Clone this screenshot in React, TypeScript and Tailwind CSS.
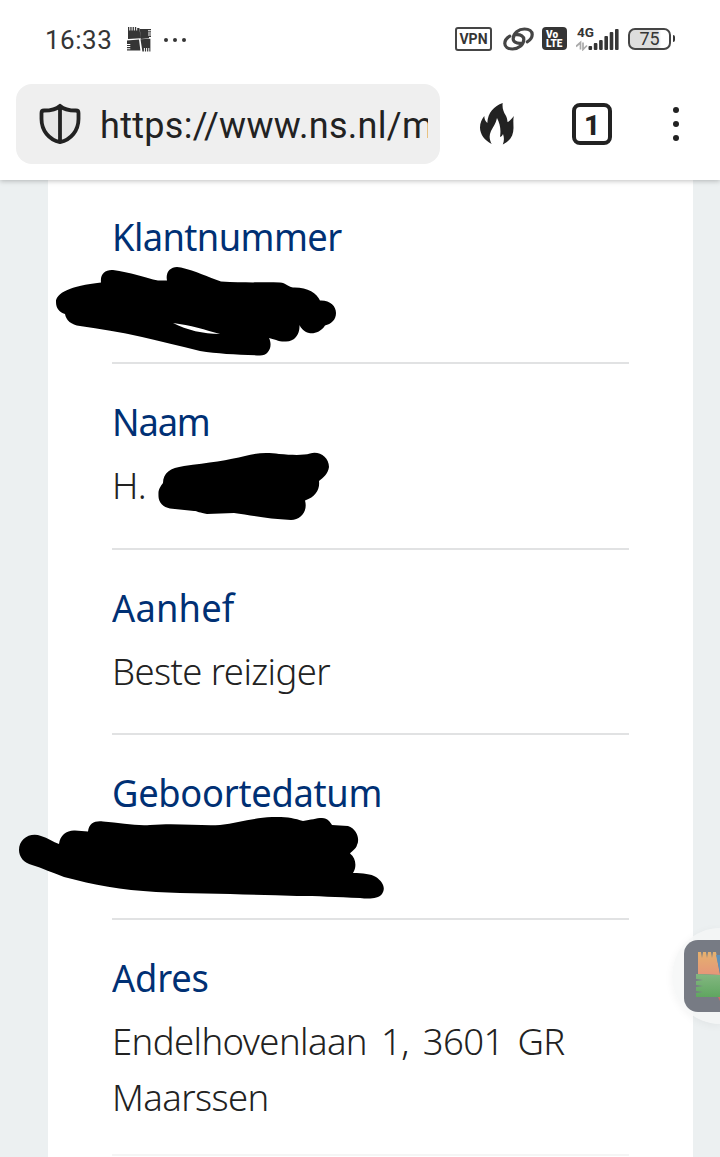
import type { ReactNode } from "react";

type Field = { label: string; value: ReactNode; labelClass: string };

const FIELDS: Field[] = [
  { label: "Klantnummer", value: null, labelClass: "tracking-[-0.6px]" },
  { label: "Naam", value: "H.", labelClass: "tracking-[-1.2px]" },
  { label: "Aanhef", value: "Beste reiziger", labelClass: "tracking-[0.2px]" },
  { label: "Geboortedatum", value: null, labelClass: "tracking-[-0.3px]" },
];

const SIGNAL_BARS = [4, 7, 10, 14, 18, 21];

function AppGlyph() {
  return (
    <svg width="24" height="25" viewBox="0 0 24 25" className="ml-[15px]">
      <path
        fill="#353535"
        d="M1 0h1.3v3.5h1V0h1.3v3.5h1V0h1.3v3.5h1V0h1.3v3.5h1V1h2.2l1.3 10.3L1 12zM12.8 2H24v1.2h-3v1h3v1.2h-3v1h3v1.2h-3v1h3v1.3h-2v1.4l-8.2.8zM0 13.5l12-1 1.4 11H0v-1.2h3.3v-1H0v-1.2h3.3v-1H0v-1.2h3.3v-1H0zM13.5 12.3l9.9-.6v12.9h-1.1V21h-1v3.6h-1.2V21h-1v3.6h-1.2V21h-1v3.6h-1.5z"
      />
    </svg>
  );
}

function StatusBar() {
  return (
    <div className="flex h-[80px] items-start pt-[26px] pl-[45px] text-[#353535]">
      <div className="flex h-[27px] w-[410px] items-center">
        <span className="pt-[2px] text-[26px] leading-[27px] tracking-[0.5px]">16:33</span>
        <AppGlyph />
        <div className="ml-[13px] flex gap-[5px]">
          <i className="size-1 rounded-full bg-[#353535]" />
          <i className="size-1 rounded-full bg-[#353535]" />
          <i className="size-1 rounded-full bg-[#353535]" />
        </div>
      </div>
      <div className="flex h-[25px] items-center">
        <div className="flex h-[24px] w-[37px] items-center justify-center rounded-[3px] border-[2.5px] border-[#454545] pt-px text-[14px] leading-none font-bold">
          VPN
        </div>
        <svg width="31" height="24" viewBox="0 0 31 24" fill="none" stroke="#454545" strokeWidth="3.2" strokeLinecap="round" className="ml-[11px]">
          <path d="M18 16.300C13 16.600 10 14.800 10.200 11.300 10.500 6 15.500 2 21.500 2c4.700 0 7.700 2.200 7.700 5.500 0 3-2 5.600-5 7.300" />
          <path d="M13 7.700C18 7.400 21 9.200 20.800 12.700 20.500 18 15.500 22 9.500 22c-4.700 0-7.700-2.200-7.700-5.500 0-3 2-5.600 5-7.300" />
        </svg>
        <div className="ml-2 flex h-[23px] w-[25px] flex-col justify-center rounded-[4px] bg-[#353535] pl-[4px] text-[10px] leading-[9px] font-black text-white">
          <span>Vo</span>
          <span>LTE</span>
        </div>
        <div className="relative ml-[9px] h-[24px] w-[43px]">
          <span className="absolute top-[-2px] left-[1px] text-[13.500px] leading-[14px] font-bold">4G</span>
          <svg width="43" height="24" viewBox="0 0 43 24">
            <path d="M4.500 22.500V15.500L0 19.500M7 15.500v7l4-4" stroke="#aaa" strokeWidth="1.700" fill="none" />
            {SIGNAL_BARS.map((h, i) => (
              <rect key={h} x={12.500 + i * 5.300} y={23 - h} width="3.600" height={h} rx="1" fill="#353535" />
            ))}
          </svg>
        </div>
        <div className="ml-[9px] flex h-[22px] w-[43px] items-center justify-center rounded-[7px] border-2 border-[#454545] bg-linear-to-r from-[#dddddd] from-70% to-white to-80% pt-px text-[18px] leading-none">
          75
        </div>
        <i className="ml-[1.500px] h-[7px] w-[2.500px] rounded-r bg-[#353535]" />
      </div>
    </div>
  );
}

function AddressBar() {
  return (
    <div className="flex h-[100px] items-start pt-1 pl-4 text-[#222]">
      <div className="flex h-20 w-[424px] items-center rounded-[16px] bg-[#efefef] pl-[23px]">
        <svg width="42" height="42" viewBox="0 0 42 42" className="shrink-0">
          <path
            d="M21 2.800c-3.500 3.400-7.500 4.700-16 4.700-1.700 0-2.500 1-2.500 2.500v6C2.500 27.500 10 36.800 21 39.200 32 36.800 39.500 27.500 39.500 16v-6c0-1.500-.8-2.500-2.500-2.500-8.500 0-12.500-1.300-16-4.700zM21 3v36"
            fill="#e6e6e6"
            stroke="#222"
            strokeWidth="3.800"
            strokeLinejoin="round"
          />
        </svg>
        <span className="ml-[19px] w-[328px] overflow-hidden pt-[3px] text-[36px] leading-[48px] tracking-[0.3px] whitespace-nowrap">
          https://www.ns.nl/m
        </span>
      </div>
      <div className="flex h-20 items-center">
        <svg width="34" height="42" viewBox="0 0 34 42" className="ml-[40px]">
          <path
            fill="#222"
            d="M22.700 0C22 5 23.500 8.500 25.500 12c1.400 2.400 1.900 4.600 2 7 2.500-1.200 4.500-3.300 6.300-6-.8 4.300-.3 8-.3 12C33.500 32.500 30 38.300 22.800 41.500c1.500-3.700 1.400-7 .2-10.500-.6 1.500-1.500 2.500-3 3 1.200-7.500 0-13-3-19-1 5.500-4 9-6 13-2 4.300-1.800 8.500.7 13C4.500 37.500 0 31 0 24.500c0-4.500 1.800-8.500 4.300-11.500 0 3 1 5.300 3 7C8 9.500 14 3 22.700 0z"
          />
        </svg>
        <div className="ml-[58px] flex h-[42px] w-[40px] items-center justify-center rounded-[8px] border-4 border-[#222] pt-[3px] text-[28px] leading-none font-extrabold">
          1
        </div>
        <div className="ml-[61px] flex flex-col gap-2">
          <i className="size-1.5 rounded-full bg-[#222]" />
          <i className="size-1.5 rounded-full bg-[#222]" />
          <i className="size-1.5 rounded-full bg-[#222]" />
        </div>
      </div>
    </div>
  );
}

// Marker strokes that hide the private values
function Redactions() {
  return (
    <svg width="720" height="1157" viewBox="0 0 720 1157" className="pointer-events-none absolute inset-0">
      <path
        fillRule="evenodd"
        d="M56 302C56 293 70 286 101 282.500C100 274 105 269.500 113 270C130 272 145 278 158 280.500H167C165 271 172 265 181 267.500C196 271 208 277 221 281.500C245 283 263 282 280 282.500C286 283 287 286 293 287.500C307 287 317 293 320 300.500C330 300 336 306 336 313C336 320 331 324 325 325.500C321 332 314 334 309 333C304 332 301 328 299.500 325C300 334 295 341.500 286 341.500C279 342 274 339 269 338C273 346 269 355.500 260 355.500C237 354.500 218 354 200 351C180 346 160 341 142 337C120 332 100 329 80 326C71 325 66 320 65 314C59 312 56 308 56 302ZM173 323C187 330 203 334 220 334C206 330 190 325 173 323Z"
      />
      <path d="M158.500 495C158 489 161 486 163 483C163 473 170 468 184 466C208 463 229 460 245 456C256 452.500 269 452.500 279 454C292 455 303 455.500 310 453.500C319 450.500 329 457 329 467C328 474 323 478 319 481C320 489 316 497 305 500.500C308 511 301 520 291 520C268 519 250 515 234 513L207 514C200 513 197 511 194 511L170 508.500C163 507 158 502 158.500 495Z" />
      <path d="M19 850C19 839 30 832 41 836C48 838 53 842 59 844C60 835 67 830 75 830.500L88 831.500C89 823 95 820.500 103 821.500C120 823 136 826 150 825C178 823 200 826 220 825C238 823 252 818 272 817C286 816.500 294 818 303 821C311 820 316 818 322 818C328 818 330 822 332 825L348 826C357 829 360 839 357 845C356 849 352 851 350 853.500C356 858 357 867 353 873C363 873 371 874 376 877C383 882 386 888 382 894C378 899 369 899 360 898C337 897 317 896 297 896C250 894 200 894 156 892C121 890 94 885 64 877C53 873 42 868 32 865C24 863 19 857 19 850Z" />
    </svg>
  );
}

function FloatingShortcut() {
  return (
    <div className="absolute top-[928px] right-0 flex h-[96px] w-[48px] items-center justify-end overflow-hidden rounded-l-full bg-[#f5f6f6]/80 shadow-[0_2px_8px_rgba(0,0,0,0.05)]">
      <div className="h-[72px] w-[36px] rounded-l-[14px] bg-[#777b84]">
        <svg width="36" height="72" viewBox="0 0 36 72">
          <defs>
            <linearGradient id="warm" x1="0" y1="0" x2="0" y2="1">
              <stop offset="0" stopColor="#e5b16e" />
              <stop offset="1" stopColor="#e59679" />
            </linearGradient>
            <linearGradient id="leaf" x1="0" y1="0" x2="0" y2="1">
              <stop offset="0" stopColor="#83b781" />
              <stop offset="1" stopColor="#60a660" />
            </linearGradient>
          </defs>
          <path fill="url(#warm)" d="M14 12h3l1 6 1-6h3l1 6 1-6h3l1 6 1-6h3l4 23-22-1z" />
          <path fill="#5f91ba" d="M32 15h4v18z" />
          <path fill="url(#leaf)" d="M12 34l24 1v22H12v-4l7-1-7-1v-4l7-1-7-1v-4l7-1-7-1z" />
          <path fill="#cf6b68" d="M34 57h2v4z" />
        </svg>
      </div>
    </div>
  );
}

export default function App() {
  return (
    <div className="relative h-[1157px] w-[720px] overflow-hidden bg-[#ecf0f1] font-[Roboto,sans-serif]">
      <header className="relative h-[180px] bg-white shadow-[0_1px_5px_rgba(0,0,0,0.25)]">
        <StatusBar />
        <AddressBar />
      </header>
      <main className="-mt-px ml-12 h-[978px] w-[645px] bg-white px-16 font-['Noto_Sans',sans-serif]">
        <dl>
          {FIELDS.map((f) => (
            <div key={f.label} className="h-[185.300px] w-[517px] border-b-2 border-[#e1e2e3] pt-[33px]">
              <dt className={`origin-left scale-x-[0.955] text-[38px] leading-[48px] font-[450] text-[#003074] ${f.labelClass}`}>
                {f.label}
              </dt>
              <dd className="mt-[12px] h-14 text-[36.500px] leading-[56px] font-light tracking-[-0.6px] text-[#222]">
                {f.value}
              </dd>
            </div>
          ))}
          <div className="h-[236px] w-[517px] border-b-2 border-[#f5f5f5] pt-[33px]">
            <dt className="origin-left scale-x-[0.955] text-[38px] leading-[48px] font-[450] tracking-[-0.2px] text-[#003074]">
              Adres
            </dt>
            <dd className="mt-[12px] text-[36.500px] leading-[56px] font-light tracking-[-0.6px] text-[#222] [word-spacing:5px]">
              Endelhovenlaan 1, 3601 GR
              <br />
              Maarssen
            </dd>
          </div>
        </dl>
      </main>
      <Redactions />
      <FloatingShortcut />
    </div>
  );
}
